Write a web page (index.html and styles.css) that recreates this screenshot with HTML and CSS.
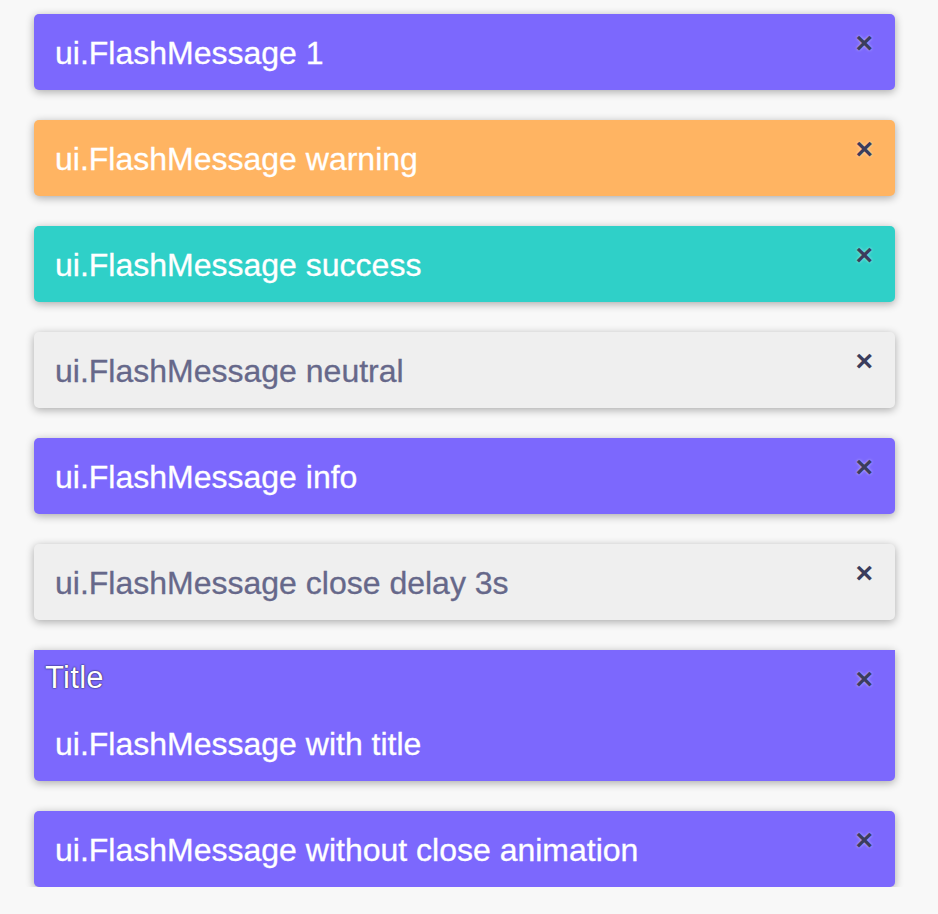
FILE: index.html
```html
<!DOCTYPE html>
<html>
<head>
<meta charset="utf-8">
<link rel="stylesheet" href="styles.css">
</head>
<body>
<div class="stack">
  <div class="flash info"><span class="msg">ui.FlashMessage 1</span><span class="close">×</span></div>
  <div class="flash warning"><span class="msg">ui.FlashMessage warning</span><span class="close">×</span></div>
  <div class="flash success"><span class="msg">ui.FlashMessage success</span><span class="close">×</span></div>
  <div class="flash neutral"><span class="msg">ui.FlashMessage neutral</span><span class="close">×</span></div>
  <div class="flash info"><span class="msg">ui.FlashMessage info</span><span class="close">×</span></div>
  <div class="flash neutral"><span class="msg">ui.FlashMessage close delay 3s</span><span class="close">×</span></div>
  <div class="flash info titled">
    <div class="title">Title</div>
    <div class="body"><span class="msg">ui.FlashMessage with title</span></div>
    <span class="close">×</span>
  </div>
  <div class="flash info"><span class="msg">ui.FlashMessage without close animation</span><span class="close">×</span></div>
</div>
</body>
</html>
```

FILE: styles.css
```css
html, body {
  margin: 0;
  padding: 0;
  background: #f8f8f8;
}
body {
  padding: 14px 43px 0 34px;
  font-family: "Liberation Sans", Arial, sans-serif;
}
.stack {
  display: flex;
  flex-direction: column;
  gap: 30px;
}
.flash {
  position: relative;
  height: 76px;
  box-sizing: border-box;
  padding: 0 60px 0 21px;
  display: flex;
  align-items: center;
  border-radius: 5px;
  box-shadow: 0 2px 9px rgba(0, 0, 0, 0.32);
  color: #fff;
  font-size: 32px;
}
.flash .msg { position: relative; top: 1px; -webkit-text-stroke: 0.3px currentColor; }
.info { background: #7c68fd; }
.warning { background: #ffb462; }
.success { background: #2fd0c8; }
.neutral { background: #efefef; color: #66688a; }
.close {
  position: absolute;
  top: 15px;
  right: 22px;
  font-size: 30px;
  font-weight: bold;
  line-height: 28px;
  color: #3b3d5c;
  text-shadow: 0 0 3px rgba(255, 255, 255, 0.55);
}
.neutral .close { text-shadow: none; }
.titled {
  height: 131px;
  flex-direction: column;
  align-items: stretch;
  padding: 0;
  border-radius: 0 0 5px 5px;
}
.titled .title {
  height: 55px;
  box-sizing: border-box;
  padding: 10px 11px 0;
  font-size: 31px;
  line-height: 36px;
  letter-spacing: 0.3px;
  text-shadow: 0 0 2px #23254a, 0 0 1px #23254a;
}
.titled .body {
  height: 76px;
  display: flex;
  align-items: center;
  padding: 0 60px 0 21px;
}
```
